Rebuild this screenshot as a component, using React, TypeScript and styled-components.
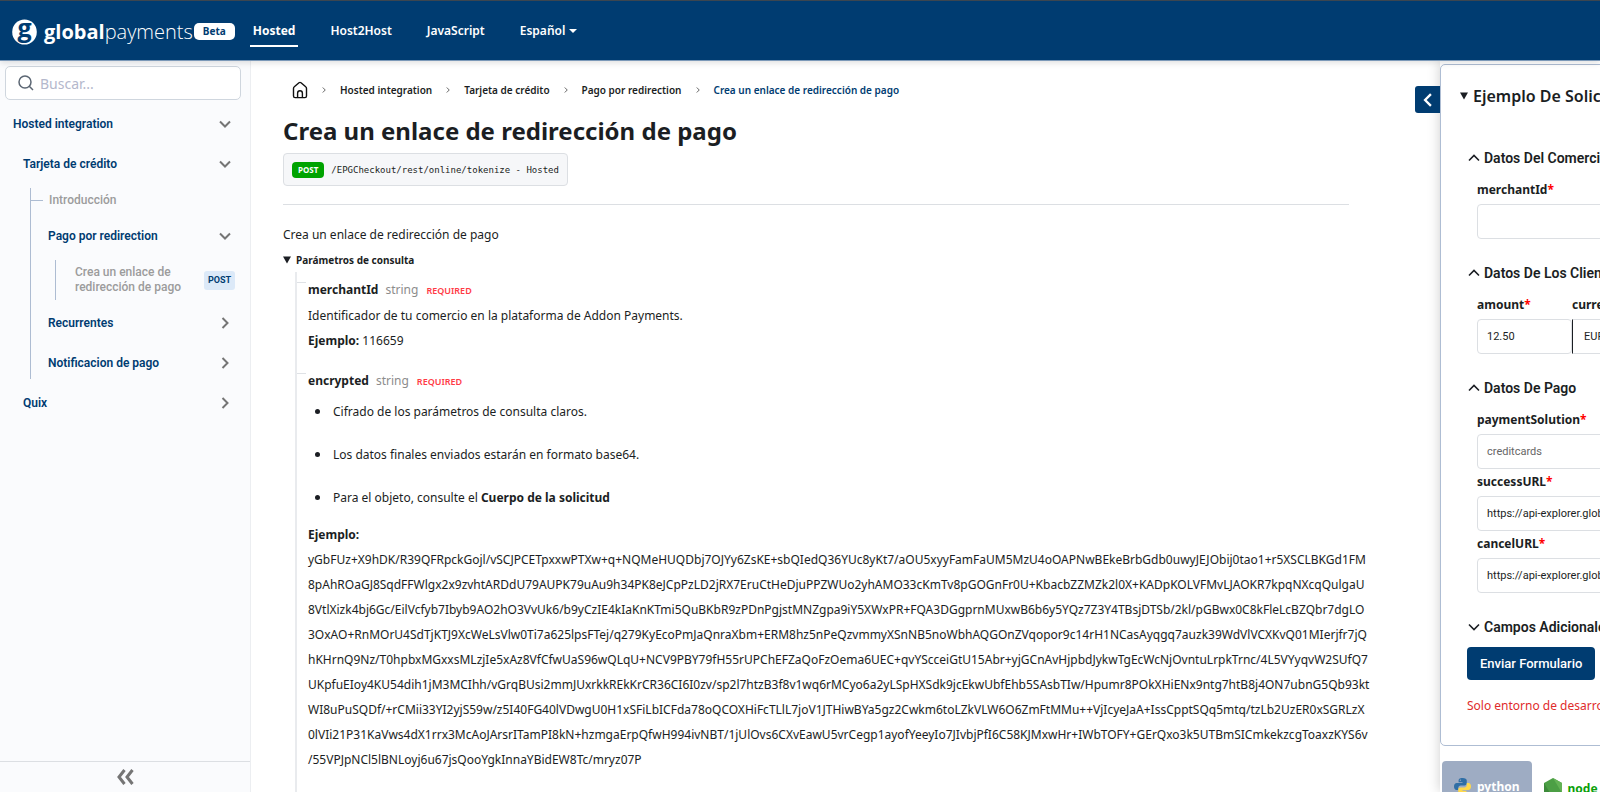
import React from 'react';
import styled, { createGlobalStyle, css } from 'styled-components';

const navy = '#003c71';
const body = "'Noto Sans', sans-serif";
const roboto = "Roboto, sans-serif";

const GlobalStyle = createGlobalStyle`
  *, *::before, *::after { box-sizing: border-box; }
  body { margin: 0; font-family: ${body}; font-size: 12px; color: #1b1e23; background: #fff; }
  a { color: inherit; text-decoration: none; }
  button, input, select { font: inherit; }
  p, h1, h2, ul, ol { margin: 0; padding: 0; }
`;

const Page = styled.div`
  display: flex;
  flex-direction: column;
  height: 100vh;
  overflow: hidden;
`;

const Header = styled.header`
  position: relative;
  z-index: 2;
  display: flex;
  flex: none;
  align-items: center;
  height: 61px;
  padding: 2px 12px 0;
  background: ${navy};
  border-top: 1px solid #3c4650;
  border-bottom: 1px solid #7c99b8;
  box-shadow: 0 2px 6px rgba(0, 0, 0, 0.12);
  color: #fff;
`;

const Brand = styled.a`
  display: flex;
  align-items: center;
`;

const Wordmark = styled.span`
  margin-left: 7px;
  font: 300 20px/28px 'Open Sans', sans-serif;
  b { font-weight: 700; }
`;

const Beta = styled.span`
  margin-left: 1px;
  padding: 0 9px;
  border-radius: 5px;
  background: #fff;
  color: ${navy};
  font-size: 10px;
  font-weight: 700;
  line-height: 17px;
`;

const TopNav = styled.nav`
  display: flex;
  gap: 29px;
  margin-left: 15px;
`;

const navItem = css`
  padding: 5px 3px;
  border: 0;
  border-bottom: 2px solid transparent;
  background: none;
  color: #fff;
  font-size: 12px;
  font-weight: 600;
  line-height: 18px;
`;

const TopLink = styled.a<{ $active?: boolean }>`
  ${navItem}
  ${p => p.$active && css`border-color: #fff; font-weight: 700;`}
`;

const LangButton = styled.button`
  ${navItem}
  display: flex;
  align-items: center;
  gap: 4px;
`;

const Columns = styled.div`
  display: flex;
  flex: 1;
  min-height: 0;
`;

const Sidebar = styled.aside`
  display: flex;
  flex: none;
  flex-direction: column;
  width: 251px;
  border-right: 1px solid #eceef1;
  background: #fafbfd;
  font-family: ${roboto};
`;

const Search = styled.label`
  display: flex;
  align-items: center;
  gap: 6px;
  height: 34px;
  margin: 5px 9px 4px 5px;
  padding: 0 12px;
  border: 1px solid #cfd6de;
  border-radius: 5px;
  background: #fff;
  input {
    flex: 1;
    min-width: 0;
    padding: 0;
    border: 0;
    outline: 0;
    background: none;
    font-family: ${body};
    font-size: 14px;
  }
  input::placeholder { color: #b4b8cc; opacity: 1; }
`;

const Tree = styled.nav`
  flex: 1;
  overflow: hidden;
  color: ${navy};
  font-weight: 600;
`;

const TreeRow = styled.a<{ $indent: number }>`
  display: flex;
  align-items: center;
  justify-content: space-between;
  min-height: 40px;
  padding: 0 19px 0 ${p => p.$indent}px;
  line-height: 15px;
`;

const LeafRow = styled(TreeRow)`
  position: relative;
  min-height: 24px;
  margin-bottom: 4px;
  padding-right: 15px;
  color: #9c9c9c;
  font-weight: 500;
`;

const Branch = styled.div`
  position: relative;
  margin: 4px 0 0 30px;
  &::before {
    content: '';
    position: absolute;
    top: 0;
    bottom: 4px;
    left: 0;
    border-left: 1px solid #adbcd2;
  }
`;

const Tick = styled.span`
  position: absolute;
  left: 0;
  width: 13px;
  border-top: 1px solid #adbcd2;
`;

const SubBranch = styled.div`
  margin: 4px 0 3px 25px;
  padding: 5px 0 1px;
  border-left: 1px solid #adbcd2;
`;

const Method = styled.span`
  flex: none;
  padding: 0 4px;
  border-radius: 3px;
  background: #dce9f8;
  font-size: 9px;
  font-weight: 700;
  line-height: 19px;
  color: ${navy};
`;

const Collapse = styled.button`
  flex: none;
  height: 31px;
  padding: 0;
  border: 0;
  border-top: 1px solid #dcdfe3;
  background: none;
  line-height: 0;
`;

const Main = styled.main`
  flex: 1;
  min-width: 0;
  padding: 16px 91px 0 32px;
  overflow-y: auto;
  scrollbar-width: none;
`;

const Crumbs = styled.ol`
  display: flex;
  align-items: center;
  gap: 13px;
  height: 26px;
  padding-left: 9px;
  list-style: none;
  font-size: 10px;
  svg { display: block; }
`;

const Crumb = styled.li<{ $current?: boolean }>`
  font-weight: 600;
  ${p => p.$current && css`color: ${navy};`}
`;

const Title = styled.h1`
  margin-top: 11px;
  font-size: 24px;
  font-weight: 700;
  line-height: 34px;
`;

const Endpoint = styled.div`
  display: inline-flex;
  align-items: center;
  gap: 7px;
  height: 33px;
  margin-top: 5px;
  padding: 0 8px;
  border: 1px solid #dcdfe3;
  border-radius: 4px;
  background: #f6f7f9;
  code { font: 9px 'DejaVu Sans Mono', monospace; }
`;

const PostPill = styled.span`
  padding: 0 6px;
  border-radius: 4px;
  background: #00a300;
  color: #fff;
  font-size: 8px;
  font-weight: 700;
  line-height: 16px;
`;

const Rule = styled.hr`
  margin: 18px 0 17px;
  border: 0;
  border-top: 1px solid #dcdfe3;
`;

const Text = styled.p`
  line-height: 25px;
  span { display: block; white-space: nowrap; }
`;

const Details = styled.details`
  summary {
    display: flex;
    align-items: center;
    gap: 5px;
    height: 25px;
    font-size: 10px;
    font-weight: 700;
    list-style: none;
  }
`;

const Params = styled.div`
  margin-left: 12px;
  padding: 5px 0 40px 11px;
  border-left: 2px solid #e9ebee;
`;

const Param = styled.section`
  position: relative;
  margin-bottom: 15px;
  &::before {
    content: '';
    position: absolute;
    top: 5px;
    left: -11px;
    width: 9px;
    border-top: 1px solid #dfe2e6;
  }
`;

const ParamHead = styled.h2`
  display: flex;
  align-items: baseline;
  gap: 7px;
  font-size: 12px;
  line-height: 25px;
`;

const Type = styled.span`
  color: #8c8c8c;
  font-weight: 400;
`;

const Required = styled.span`
  margin-left: 1px;
  color: #ff3b46;
  font-size: 9px;
  font-weight: 600;
`;

const Bullets = styled.ul`
  display: grid;
  gap: 18px;
  margin: 5px 0 12px;
  padding-left: 7px;
  line-height: 25px;
  list-style: none;
  li {
    display: flex;
    align-items: center;
  }
  li::before {
    content: '';
    width: 5px;
    height: 5px;
    margin-right: 13px;
    border-radius: 50%;
    background: #1b1e23;
  }
`;

const PanelArea = styled.aside`
  position: relative;
  flex: none;
  width: 160px;
  box-shadow: 0 0 12px rgba(0, 0, 0, 0.2);
`;

const PanelToggle = styled.button`
  position: absolute;
  top: 25px;
  left: -25px;
  display: grid;
  place-items: center;
  width: 25px;
  height: 27px;
  padding: 0;
  border: 0;
  border-radius: 3px 0 0 3px;
  background: ${navy};
  color: #fff;
`;

const PanelClip = styled.div`
  height: 100%;
  padding-top: 3px;
  overflow: hidden;
  background: #fff;
`;

const Panel = styled.form`
  width: 480px;
  padding: 17px 20px 27px 27px;
  border: 1px solid #aebdd3;
  border-radius: 5px;
`;

const PanelTitle = styled.h2`
  display: flex;
  align-items: center;
  gap: 5px;
  margin: 0 0 34px -8px;
  font-size: 16px;
  font-weight: 600;
  line-height: 28px;
`;

const Group = styled.fieldset`
  margin: 0 0 20px;
  padding: 0;
  border: 0;
`;

const GroupTitle = styled.div`
  display: flex;
  align-items: center;
  gap: 4px;
  font: 600 14px/28px ${roboto};
`;

const Fields = styled.div`
  display: flex;
  flex-wrap: wrap;
  padding: 5px 0 0 9px;
`;

const Field = styled.label<{ $w: number }>`
  width: ${p => p.$w}px;
  font-size: 12px;
  font-weight: 700;
  line-height: 25px;
  i { color: #f00; font-style: normal; }
`;

const control = css`
  display: block;
  width: 100%;
  height: 35px;
  margin: 2px 0 0;
  border: 1px solid #dcdfe3;
  border-radius: 4px;
  background: #fff;
  color: #1b1e23;
  font: 400 11px ${roboto};
`;

const Input = styled.input`
  ${control}
  padding: 0 9px;
  &::placeholder { color: #666; opacity: 1; }
`;

const Select = styled.select`
  ${control}
  appearance: none;
  padding: 0 11px;
  border-left-color: #1b1e23;
  border-radius: 0 4px 4px 0;
`;

const Submit = styled.button`
  display: block;
  height: 33px;
  margin: 6px 0 0 -1px;
  padding: 0 13px;
  border: 0;
  border-radius: 4px;
  background: ${navy};
  color: #fff;
  font: 500 13px ${roboto};
`;

const Warning = styled.p`
  margin: 14px 0 0 -1px;
  color: #e02b2b;
  font-size: 12px;
  line-height: 24px;
`;

const Tabs = styled.div`
  display: flex;
  gap: 12px;
  width: 480px;
  padding: 15px 2px;
`;

const Tab = styled.button<{ $active?: boolean }>`
  display: flex;
  align-items: center;
  gap: 6px;
  height: 54px;
  padding: 0 ${p => (p.$active ? '12px 4px' : 0)};
  border: 0;
  border-radius: 4px;
  background: ${p => (p.$active ? '#9eacc3' : 'none')};
  color: ${p => (p.$active ? '#fff' : '#0a9f0a')};
  font-size: 12px;
  font-weight: 700;
`;

type Dir = 'down' | 'right' | 'up' | 'left';
const turns: Record<Dir, number> = { down: 0, left: 90, up: 180, right: 270 };

const Chevron = ({ dir, size = 12, color = '#757575', width = 2 }: { dir: Dir; size?: number; color?: string; width?: number }) => (
  <svg width={size} height={size} viewBox="0 0 12 12" fill="none" stroke={color} strokeWidth={width} aria-hidden="true">
    <path d="M1 3.5 6 8.5 11 3.5" transform={`rotate(${turns[dir]} 6 6)`} />
  </svg>
);

const GroupChevron = ({ dir }: { dir: Dir }) => <Chevron dir={dir} color="#1b1e23" width={1.6} />;

const Triangle = () => (
  <svg width="8" height="8" viewBox="0 0 8 8" aria-hidden="true">
    <path d="M0 .5h8L4 7.5z" fill="#1b1e23" />
  </svg>
);

const LogoMark = () => (
  <svg width="25" height="26" viewBox="0 0 25 26" overflow="visible" aria-hidden="true">
    <ellipse cx="12.5" cy="13" rx="12.3" ry="12.6" fill="#fff" />
    <text x="12.5" y="18" textAnchor="middle" fontFamily="Open Sans" fontWeight="700" fontSize="25" fill={navy}>g</text>
  </svg>
);

const HomeIcon = () => (
  <svg width="16" height="18" viewBox="0 0 16 18" fill="none" stroke="#111" strokeWidth="1.4" strokeLinejoin="round" aria-hidden="true">
    <path d="M1.500 7.400 C1.500 6.700 1.800 6.200 2.300 5.800 L7 1.700 Q8 1 9 1.700 L13.700 5.800 C14.200 6.200 14.500 6.700 14.500 7.400 V15a1.600 1.600 0 0 1-1.600 1.600H3.100a1.600 1.600 0 0 1-1.600-1.600z" />
    <path d="M5.600 16.500v-4.300a2.400 2.400 0 0 1 4.800 0v4.300" />
  </svg>
);

const PythonIcon = () => (
  <svg width="17" height="17" viewBox="0 0 24 24" aria-hidden="true">
    <path fill="#2f6ea5" d="M12 0C7.500 0 6.500 2 6.500 3.500V6H12v1H4C1.500 7 0 9 0 12s1.500 5 3.500 5H6v-3c0-2 1.500-3.500 3.500-3.500H15c1.700 0 3-1.300 3-3v-4C18 1.500 16 0 12 0zM9 2a1 1 0 1 1 0 2 1 1 0 0 1 0-2z" />
    <path fill="#ffd94a" d="M12 24c4.500 0 5.500-2 5.500-3.500V18H12v-1h8c2.500 0 4-2 4-5s-1.500-5-3.500-5H18v3c0 2-1.500 3.500-3.500 3.500H9c-1.700 0-3 1.300-3 3v4c0 2 2 3.500 6 3.500zm3-2a1 1 0 1 1 0-2 1 1 0 0 1 0 2z" />
  </svg>
);

const NodeIcon = () => (
  <svg width="18" height="20" viewBox="0 0 18 20" aria-hidden="true">
    <path fill="#4c9f45" d="M9 0l9 5v10l-9 5-9-5V5z" />
    <path fill="#3c8a3a" d="M0 5l9 15-9-5z" />
    <path fill="#63b255" d="M9 0l9 5v10z" />
  </svg>
);

const crumbs = ['Hosted integration', 'Tarjeta de crédito', 'Pago por redirection', 'Crea un enlace de redirección de pago'];

const sample = [
  'yGbFUz+X9hDK/R39QFRpckGojl/vSCJPCETpxxwPTXw+q+NQMeHUQDbj7OJYy6ZsKE+sbQIedQ36YUc8yKt7/aOU5xyyFamFaUM5MzU4oOAPNwBEkeBrbGdb0uwyJEJObij0tao1+r5XSCLBKGd1FM',
  '8pAhROaGJ8SqdFFWlgx2x9zvhtARDdU79AUPK79uAu9h34PK8eJCpPzLD2jRX7EruCtHeDjuPPZWUo2yhAMO33cKmTv8pGOGnFr0U+KbacbZZMZk2l0X+KADpKOLVFMvLJAOKR7kpqNXcqQulgaU',
  '8VtlXizk4bj6Gc/EilVcfyb7Ibyb9AO2hO3VvUk6/b9yCzIE4kIaKnKTmi5QuBKbR9zPDnPgjstMNZgpa9iY5XWxPR+FQA3DGgprnMUxwB6b6y5YQz7Z3Y4TBsjDTSb/2kl/pGBwx0C8kFleLcBZQbr7dgLO',
  '3OxAO+RnMOrU4SdTjKTJ9XcWeLsVlw0Ti7a625lpsFTej/q279KyEcoPmJaQnraXbm+ERM8hz5nPeQzvmmyXSnNB5noWbhAQGOnZVqopor9c14rH1NCasAyqgq7auzk39WdVlVCXKvQ01MIerjfr7jQ',
  'hKHrnQ9Nz/T0hpbxMGxxsMLzjIe5xAz8VfCfwUaS96wQLqU+NCV9PBY79fH55rUPChEFZaQoFzOema6UEC+qvYScceiGtU15Abr+yjGCnAvHjpbdJykwTgEcWcNjOvntuLrpkTrnc/4L5VYyqvW2SUfQ7',
  'UKpfuEIoy4KU54dih1jM3MCIhh/vGrqBUsi2mmJUxrkkREkKrCR36CI6I0zv/sp2l7htzB3f8v1wq6rMCyo6a2yLSpHXSdk9jcEkwUbfEhb5SAsbTIw/Hpumr8POkXHiENx9ntg7htB8j4ON7ubnG5Qb93kt',
  'WI8uPuSQDf/+rCMii33YI2yjS59w/z5I40FG40lVDwgU0H1xSFiLbICFda78oQCOXHiFcTLlL7joV1JTHiwBYa5gz2Cwkm6toLZkVLW6O6ZmFtMMu++VjIcyeJaA+IssCpptSQq5mtq/tzLb2UzER0xSGRLzX',
  '0lVIi21P31KaVws4dX1rrx3McAoJArsrITamPI8kN+hzmgaErpQfwH994ivNBT/1jUlOvs6CXvEawU5vrCegp1ayofYeeyIo7JIvbjPfI6C58KJMxwHr+IWbTOFY+GErQxo3k5UTBmSICmkekzcgToaxzKYS6v',
  '/55VPJpNCl5lBNLoyj6u67jsQooYgkInnaYBidEW8Tc/mryz07P',
];

export default function App() {
  return (
    <Page>
      <GlobalStyle />
      <Header>
        <Brand href="#">
          <LogoMark />
          <Wordmark><b>global</b>payments</Wordmark>
          <Beta>Beta</Beta>
        </Brand>
        <TopNav>
          <TopLink href="#" $active>Hosted</TopLink>
          <TopLink href="#">Host2Host</TopLink>
          <TopLink href="#">JavaScript</TopLink>
          <LangButton type="button">
            Español
            <svg width="8" height="4" viewBox="0 0 8 4" aria-hidden="true"><path d="M0 0h8L4 4z" fill="#fff" /></svg>
          </LangButton>
        </TopNav>
      </Header>
      <Columns>
        <Sidebar>
          <Search>
            <svg width="16" height="16" viewBox="0 0 16 16" fill="none" stroke="#5b6673" strokeWidth="1.5" aria-hidden="true">
              <circle cx="7" cy="7" r="6" /><path d="m11.300 11.300 3.700 3.700" />
            </svg>
            <input type="search" placeholder="Buscar..." aria-label="Buscar" />
          </Search>
          <Tree>
            <TreeRow href="#" $indent={13}>Hosted integration <Chevron dir="down" /></TreeRow>
            <TreeRow href="#" $indent={23}>Tarjeta de crédito <Chevron dir="down" /></TreeRow>
            <Branch>
              <LeafRow href="#" $indent={19}><Tick />Introducción</LeafRow>
              <TreeRow href="#" $indent={18}>Pago por redirection <Chevron dir="down" /></TreeRow>
              <SubBranch>
                <LeafRow href="#" $indent={19}>
                  <span>Crea un enlace de<br />redirección de pago</span>
                  <Method>POST</Method>
                </LeafRow>
              </SubBranch>
              <TreeRow href="#" $indent={18}>Recurrentes <Chevron dir="right" /></TreeRow>
              <TreeRow href="#" $indent={18}>Notificacion de pago <Chevron dir="right" /></TreeRow>
            </Branch>
            <TreeRow href="#" $indent={23}>Quix <Chevron dir="right" /></TreeRow>
          </Tree>
          <Collapse type="button" aria-label="Contraer menú">
            <svg width="18" height="16" viewBox="0 0 18 16" fill="none" stroke="#757575" strokeWidth="3" aria-hidden="true">
              <path d="M8.500 1 3 8l5.500 7M16.500 1 11 8l5.500 7" />
            </svg>
          </Collapse>
        </Sidebar>
        <Main>
          <Crumbs>
            <li><a href="#" aria-label="Inicio"><HomeIcon /></a></li>
            {crumbs.map((c, i) => (
              <React.Fragment key={c}>
                <Chevron dir="right" size={6} color="#666" />
                <Crumb $current={i === crumbs.length - 1}><a href="#">{c}</a></Crumb>
              </React.Fragment>
            ))}
          </Crumbs>
          <Title>Crea un enlace de redirección de pago</Title>
          <Endpoint>
            <PostPill>POST</PostPill>
            <code>/EPGCheckout/rest/online/tokenize - Hosted</code>
          </Endpoint>
          <Rule />
          <Text>Crea un enlace de redirección de pago</Text>
          <Details open>
            <summary><Triangle />Parámetros de consulta</summary>
            <Params>
              <Param>
                <ParamHead>merchantId <Type>string</Type> <Required>REQUIRED</Required></ParamHead>
                <Text>Identificador de tu comercio en la plataforma de Addon Payments.</Text>
                <Text><b>Ejemplo:</b> 116659</Text>
              </Param>
              <Param>
                <ParamHead>encrypted <Type>string</Type> <Required>REQUIRED</Required></ParamHead>
                <Bullets>
                  <li>Cifrado de los parámetros de consulta claros.</li>
                  <li>Los datos finales enviados estarán en formato base64.</li>
                  <li><div>Para el objeto, consulte el <b>Cuerpo de la solicitud</b></div></li>
                </Bullets>
                <Text><b>Ejemplo:</b></Text>
                <Text>{sample.map(l => <span key={l}>{l}</span>)}</Text>
              </Param>
            </Params>
          </Details>
        </Main>
        <PanelArea>
          <PanelToggle type="button" aria-label="Ampliar panel"><Chevron dir="left" size={14} color="#fff" /></PanelToggle>
          <PanelClip>
            <Panel>
              <PanelTitle><Triangle />Ejemplo De Solicitud</PanelTitle>
              <Group>
                <GroupTitle><GroupChevron dir="up" />Datos Del Comercio</GroupTitle>
                <Fields>
                  <Field $w={400}>merchantId<i>*</i><Input type="text" /></Field>
                </Fields>
              </Group>
              <Group>
                <GroupTitle><GroupChevron dir="up" />Datos De Los Clientes</GroupTitle>
                <Fields>
                  <Field $w={95}>amount<i>*</i><Input type="text" defaultValue="12.50" /></Field>
                  <Field $w={95}>currency<i>*</i><Select><option>EUR</option></Select></Field>
                </Fields>
              </Group>
              <Group>
                <GroupTitle><GroupChevron dir="up" />Datos De Pago</GroupTitle>
                <Fields>
                  <Field $w={400}>paymentSolution<i>*</i><Input type="text" placeholder="creditcards" /></Field>
                  <Field $w={400}>successURL<i>*</i><Input type="text" defaultValue="https://api-explorer.globalpayments.com" /></Field>
                  <Field $w={400}>cancelURL<i>*</i><Input type="text" defaultValue="https://api-explorer.globalpayments.com" /></Field>
                </Fields>
              </Group>
              <GroupTitle><GroupChevron dir="down" />Campos Adicionales</GroupTitle>
              <Submit type="button">Enviar Formulario</Submit>
              <Warning>Solo entorno de desarrollo</Warning>
            </Panel>
            <Tabs>
              <Tab type="button" $active><PythonIcon />python</Tab>
              <Tab type="button"><NodeIcon />node</Tab>
            </Tabs>
          </PanelClip>
        </PanelArea>
      </Columns>
    </Page>
  );
}
